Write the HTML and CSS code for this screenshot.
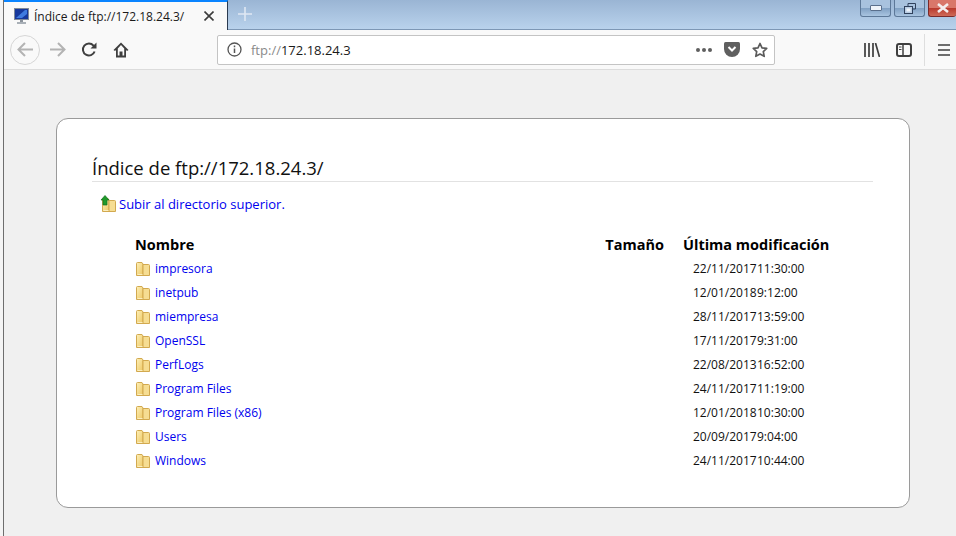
FILE: index.html
```html
<!DOCTYPE html>
<html lang="es">
<head>
<meta charset="UTF-8">
<title>Índice de ftp://172.18.24.3/</title>
<link rel="stylesheet" href="styles.css">
</head>
<body>
<svg class="defs" width="0" height="0">
    <defs>
        <linearGradient id="folderFill" x1="0" y1="0" x2="1" y2="1">
            <stop offset="0" stop-color="#fdf0b8"/>
            <stop offset="1" stop-color="#eec864"/>
        </linearGradient>
        <symbol id="folder" viewBox="0 0 16 16">
            <path d="M1.5 14.5V2.5q0-1 1-1h4.5l1 1.5v11.5z" fill="url(#folderFill)" stroke="#d2a94f"/>
            <path d="M8 3.5h5.5q1 0 1 1v10H8z" fill="#f6dd92" stroke="#d2a94f"/>
            <path d="M2.5 13.5h5" stroke="#fbeec0"/>
        </symbol>
    </defs>
</svg>
<div class="strip"></div>
<div class="window">
    <div class="titlebar">
        <div class="tab">
            <svg class="tab-icon" width="15" height="16" viewBox="0 0 15 16">
                <rect x="0.5" y="0.5" width="14" height="11" fill="#16389c" stroke="#7f8a99"/>
                <path d="M2 10L11 2h2v4l-5 4z" fill="#3f7be0"/>
                <rect x="6" y="12" width="3" height="2" fill="#8b939c"/>
                <rect x="3" y="14" width="9" height="2" fill="#a9b0b7"/>
            </svg>
            <span class="tab-title">Índice de ftp://172.18.24.3/</span>
            <svg class="tab-close" width="10" height="10" viewBox="0 0 10 10">
                <path d="M0.5 0.5l9 9M9.5 0.5l-9 9" stroke="#3c3c3c" stroke-width="1.6"/>
            </svg>
        </div>
        <svg class="new-tab" width="14" height="14" viewBox="0 0 14 14">
            <path d="M7 0v14M0 7h14" stroke="#dfe8f3" stroke-width="1.6"/>
        </svg>
        <div class="caption">
            <div class="cap-btn"><span class="cap-min"></span></div>
            <div class="cap-btn">
                <svg width="12" height="11" viewBox="0 0 12 11">
                    <path d="M4 3V0.5h7.5V6H9" fill="none" stroke="#30415c"/>
                    <rect x="0.5" y="3.5" width="8" height="7" fill="#b9cde4" stroke="#30415c"/>
                    <rect x="2.5" y="5.5" width="4" height="3" fill="#eef3f9"/>
                </svg>
            </div>
            <div class="cap-btn cap-close">
                <svg width="14" height="10" viewBox="0 0 14 10">
                    <path d="M2 1l10 8M12 1L2 9" stroke="#f4eeee" stroke-width="2.6"/>
                </svg>
            </div>
        </div>
    </div>
    <div class="toolbar">
        <div class="back">
            <svg width="17" height="15" viewBox="0 0 17 15">
                <path d="M16 7.5H2M8 1L1.5 7.5 8 14" fill="none" stroke="#b3b3b3" stroke-width="2"/>
            </svg>
        </div>
        <svg class="tool forward" width="17" height="15" viewBox="0 0 17 15">
            <path d="M1 7.5h14M9 1l6.5 6.5L9 14" fill="none" stroke="#b3b3b3" stroke-width="2"/>
        </svg>
        <svg class="tool reload" width="16" height="16" viewBox="0 0 16 16">
            <path d="M13.6 9.5A6 6 0 1 1 12.5 3.6L14 5" fill="none" stroke="#3f3f3f" stroke-width="2"/>
            <path d="M15.5 0.5v6h-6z" fill="#3f3f3f"/>
        </svg>
        <svg class="tool home" width="16" height="16" viewBox="0 0 16 16">
            <path d="M8 0.5L0.5 8 2 9l1-1v7.5h10V8l1 1 1.500-1z" fill="#3f3f3f"/>
            <path d="M8 3L4.800 6.500v7h1.700V9.500h3v4h1.700v-7z" fill="#f9f9f9"/>
            <rect x="7" y="10" width="2" height="5" fill="#3f3f3f"/>
        </svg>
        <div class="urlbar">
            <svg class="info" width="15" height="15" viewBox="0 0 15 15">
                <circle cx="7.500" cy="7.500" r="6.500" fill="none" stroke="#555" stroke-width="1.300"/>
                <path d="M7.500 6.500v4.500M7.500 3.500v1.700" stroke="#555" stroke-width="1.500"/>
            </svg>
            <span class="url"><span class="url-scheme">ftp://</span>172.18.24.3</span>
            <span class="dots"><i></i><i></i><i></i></span>
            <svg class="pocket" width="16" height="15" viewBox="0 0 16 15">
                <path d="M1.500 0h13Q16 0 16 1.500V7A8 8 0 0 1 0 7V1.500Q0 0 1.500 0z" fill="#5f5f5f"/>
                <path d="M4.500 5L8 8.500 11.500 5" fill="none" stroke="#fff" stroke-width="2"/>
            </svg>
            <svg class="star" width="16" height="16" viewBox="0 0 16 16">
                <path d="M8 1.500l2 4.300 4.700.6-3.400 3.200.9 4.700L8 12l-4.200 2.300.9-4.700L1.300 6.400 6 5.800z" fill="none" stroke="#5a5a5a" stroke-width="1.700" stroke-linejoin="round"/>
            </svg>
        </div>
        <svg class="tool library" width="16" height="14" viewBox="0 0 16 14">
            <path d="M1 0v14M5 0v14M9 0v14M11.500 0l4 14" stroke="#3f3f3f" stroke-width="1.700"/>
        </svg>
        <svg class="tool sidebar" width="16" height="14" viewBox="0 0 16 14">
            <rect x="1" y="1" width="14" height="12" rx="2" fill="none" stroke="#3f3f3f" stroke-width="2"/>
            <path d="M7 1v12" stroke="#3f3f3f" stroke-width="1.500"/>
            <path d="M3 4h2.500M3 6.500h2.500" stroke="#3f3f3f"/>
        </svg>
        <div class="sep"></div>
        <svg class="tool menu" width="12" height="12" viewBox="0 0 12 12">
            <path d="M0 1h12M0 6h12M0 11h12" stroke="#3f3f3f" stroke-width="1.700"/>
        </svg>
    </div>
    <div class="content">
        <div class="box">
            <h1>Índice de ftp://172.18.24.3/</h1>
            <p class="up">
                <svg class="up-icon" width="17" height="18" viewBox="0 0 17 18">
                    <use href="#folder" x="1" y="2" width="16" height="16"/>
                    <path d="M5 0.500L9 5H7v5H3V5H1z" fill="#1f9a2a" stroke="#14701c" stroke-width="0.700"/>
                </svg>
                <a href="#">Subir al directorio superior.</a>
            </p>
            <table>
                <thead>
                    <tr>
                        <th class="col-name">Nombre</th>
                        <th class="col-size">Tamaño</th>
                        <th class="col-mod" colspan="2">Última modificación</th>
                    </tr>
                </thead>
                <tbody>
                    <tr><td class="name"><svg class="fld"><use href="#folder"/></svg><a href="#">impresora</a></td><td></td><td class="date">22/11/2017</td><td>11:30:00</td></tr>
                    <tr><td class="name"><svg class="fld"><use href="#folder"/></svg><a href="#">inetpub</a></td><td></td><td class="date">12/01/2018</td><td>9:12:00</td></tr>
                    <tr><td class="name"><svg class="fld"><use href="#folder"/></svg><a href="#">miempresa</a></td><td></td><td class="date">28/11/2017</td><td>13:59:00</td></tr>
                    <tr><td class="name"><svg class="fld"><use href="#folder"/></svg><a href="#">OpenSSL</a></td><td></td><td class="date">17/11/2017</td><td>9:31:00</td></tr>
                    <tr><td class="name"><svg class="fld"><use href="#folder"/></svg><a href="#">PerfLogs</a></td><td></td><td class="date">22/08/2013</td><td>16:52:00</td></tr>
                    <tr><td class="name"><svg class="fld"><use href="#folder"/></svg><a href="#">Program Files</a></td><td></td><td class="date">24/11/2017</td><td>11:19:00</td></tr>
                    <tr><td class="name"><svg class="fld"><use href="#folder"/></svg><a href="#">Program Files (x86)</a></td><td></td><td class="date">12/01/2018</td><td>10:30:00</td></tr>
                    <tr><td class="name"><svg class="fld"><use href="#folder"/></svg><a href="#">Users</a></td><td></td><td class="date">20/09/2017</td><td>9:04:00</td></tr>
                    <tr><td class="name"><svg class="fld"><use href="#folder"/></svg><a href="#">Windows</a></td><td></td><td class="date">24/11/2017</td><td>10:44:00</td></tr>
                </tbody>
            </table>
        </div>
    </div>
</div>
</body>
</html>
```

FILE: styles.css
```css
html, body {
    height: 100%;
}
body {
    margin: 0;
    display: flex;
    overflow: hidden;
    font-family: "Open Sans", "Noto Sans", sans-serif;
    background-color: #f0f0f0;
}
.defs {
    position: absolute;
}
.strip {
    width: 3px;
    background-color: #f4f4f4;
    border-right: 1px solid #6e6e6e;
    flex: none;
}
.window {
    flex: 1;
    min-width: 0;
    display: flex;
    flex-direction: column;
}

/* title bar */
.titlebar {
    height: 30px;
    display: flex;
    align-items: flex-start;
    background: linear-gradient(to bottom, #9ab5d4, #b9d2ec);
    border-bottom: 1px solid #7d97b5;
    box-sizing: border-box;
}
.tab {
    width: 224px;
    height: 30px;
    box-sizing: border-box;
    display: flex;
    align-items: center;
    background-color: #f9f9f9;
    border-top: 2px solid #0a84ff;
    border-right: 1px solid #2a3a50;
    padding: 0 13px 0 10px;
    flex: none;
}
.tab-title {
    margin-left: 5px;
    font-size: 12px;
    color: #1a1a1a;
    flex: 1;
}
.new-tab {
    margin: 7px 0 0 10px;
}
.caption {
    margin-left: auto;
    display: flex;
    gap: 3px;
}
.cap-btn {
    width: 29px;
    height: 16px;
    border: 1px solid #5d7898;
    border-top: none;
    border-radius: 0 0 3px 3px;
    background: linear-gradient(to bottom, #a8c2de 50%, #7f9fc2 50%, #a9c4e0);
    display: flex;
    align-items: center;
    justify-content: center;
}
.cap-min {
    width: 10px;
    height: 4px;
    background-color: #eef3f9;
    border: 1px solid #5a6f8c;
    border-radius: 1px;
}
.cap-close {
    width: 27px;
    border-right: none;
    border-color: #7a2a2a;
    background: linear-gradient(to bottom, #d9776a 50%, #b8382c 50%, #cf6a58);
}

/* toolbar */
.toolbar {
    height: 40px;
    box-sizing: border-box;
    display: flex;
    align-items: center;
    background-color: #f9f9f9;
    border-bottom: 1px solid #dcdcdc;
    flex: none;
}
.back {
    width: 30px;
    height: 30px;
    box-sizing: border-box;
    margin-left: 6px;
    border: 1px solid #d6d6d6;
    border-radius: 50%;
    display: flex;
    align-items: center;
    justify-content: center;
    flex: none;
}
.tool {
    flex: none;
}
.forward {
    margin-left: 9px;
}
.reload {
    margin-left: 15px;
}
.home {
    margin-left: 16px;
}
.urlbar {
    width: 558px;
    height: 30px;
    box-sizing: border-box;
    margin-left: 88px;
    margin-left: 88px;
    background-color: #fff;
    border: 1px solid #c4c4c4;
    border-radius: 2px;
    display: flex;
    align-items: center;
    padding: 0 6px 0 9px;
    flex: none;
}
.url {
    margin-left: 9px;
    font-size: 13px;
    color: #1a1a1a;
    flex: 1;
}
.url-scheme {
    color: #8a8a8a;
}
.dots {
    display: flex;
    gap: 2px;
    margin-right: 12px;
}
.dots i {
    width: 4px;
    height: 4px;
    border-radius: 50%;
    background-color: #5f5f5f;
}
.star {
    margin-left: 12px;
}
.library {
    margin-left: 89px;
}
.sidebar {
    margin-left: 16px;
}
.sep {
    width: 1px;
    height: 32px;
    background-color: #dedede;
    margin-left: 12px;
}
.menu {
    margin-left: 13px;
}

/* directory listing */
.content {
    flex: 1;
    padding: 48px 46px 28px 52px;
    min-height: 0;
}
.box {
    height: 390px;
    box-sizing: border-box;
    background-color: #fff;
    border: 1px solid #9a9a9a;
    border-radius: 12px;
    padding: 36px 36px 0 35px;
}
h1 {
    margin: 0;
    height: 26px;
    font-size: 18.500px;
    line-height: 26px;
    font-weight: 400;
    color: #111;
    border-bottom: 1px solid #e2e2e2;
}
.up {
    margin: 12px 0 0 8px;
    display: flex;
    align-items: center;
    gap: 2px;
    font-size: 13px;
    height: 20px;
}
a {
    color: #0000ee;
    text-decoration: none;
}
table {
    margin: 18px 0 0 43px;
    border-collapse: collapse;
    table-layout: fixed;
    width: 696px;
    font-size: 12px;
    color: #111;
}
th {
    height: 24px;
    padding: 0;
    font-size: 14.500px;
    font-weight: 700;
    color: #000;
    text-align: left;
}
.col-name {
    width: 420px;
}
.col-size {
    width: 109px;
    text-align: right;
}
.col-mod {
    padding-left: 19px;
    width: 167px;
}
td {
    height: 24px;
    padding: 0;
}
col {
    width: auto;
}
.name a {
    vertical-align: middle;
}
.name {
    font-size: 12px;
}
.fld {
    width: 16px;
    height: 16px;
    vertical-align: middle;
    margin-right: 4px;
}
.date {
    padding-left: 29px;
    width: 85px;
}
```
